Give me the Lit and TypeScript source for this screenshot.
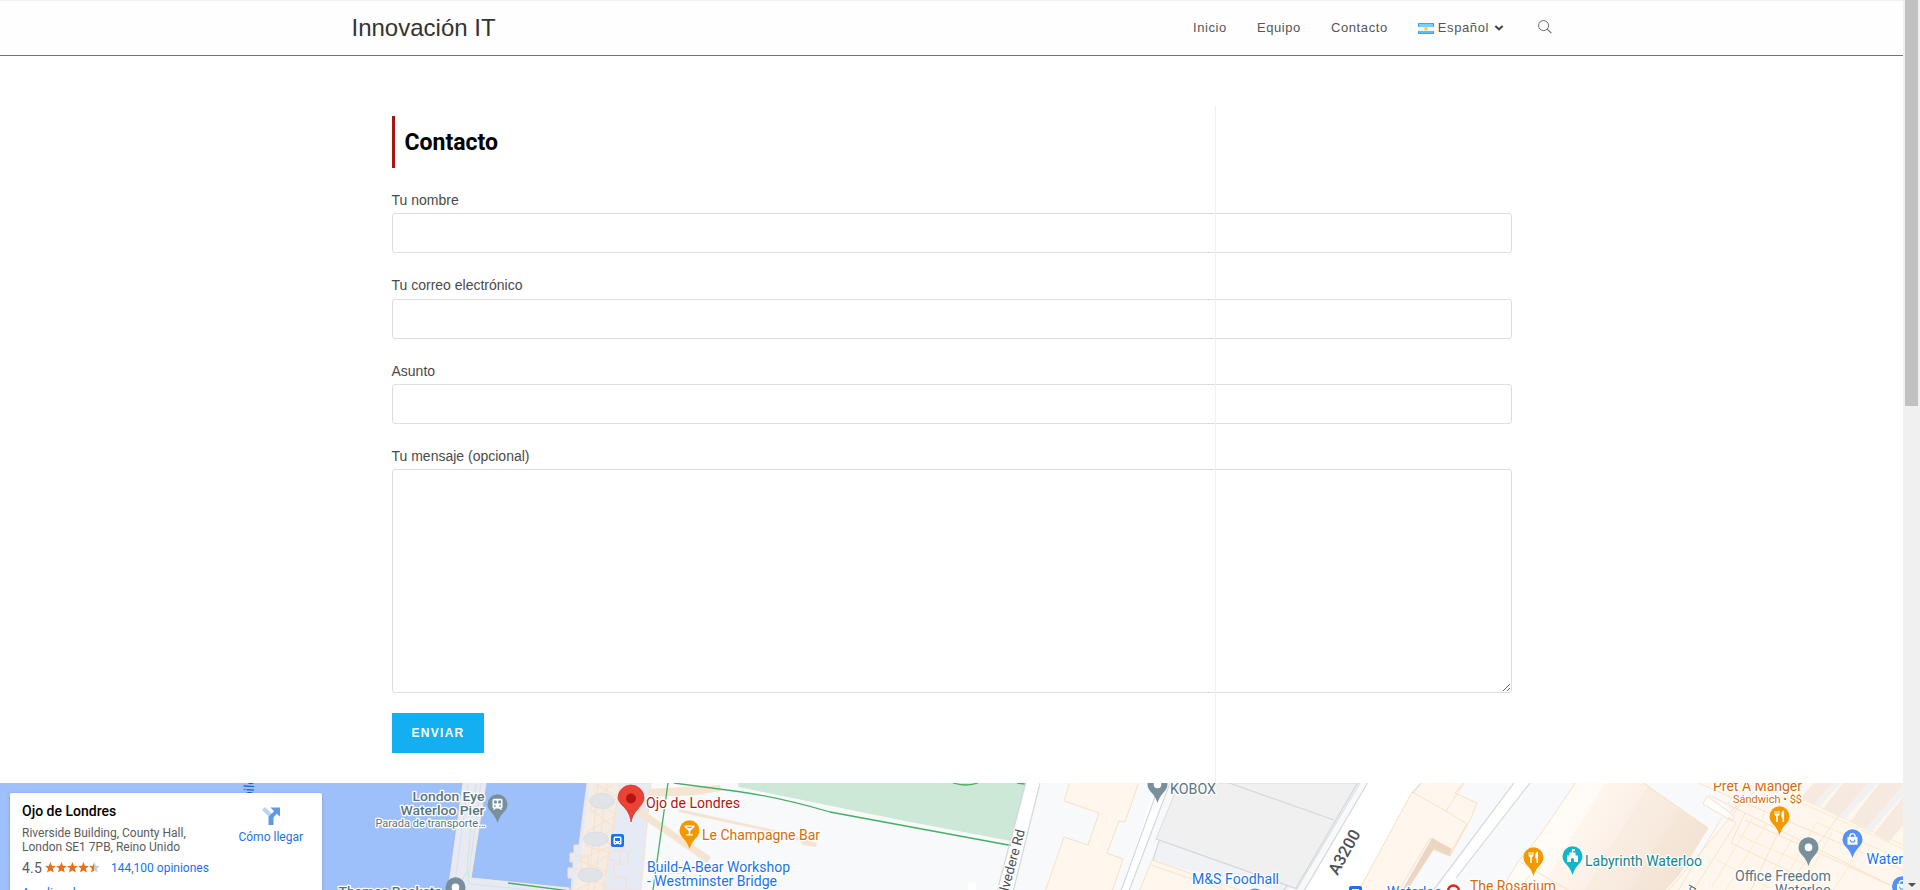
import { LitElement, html, svg, css } from "lit";
import { customElement } from "lit/decorators.js";

interface MapLabel {
  text: string;
  x: number;
  y: number;
  width?: number;
  size: number;
  tone: string;
  anchor?: string;
}

const LABELS: MapLabel[] = [
  { text: "London Eye", x: 484.5, y: 801, width: 72, size: 13.5, tone: "slate strong", anchor: "end" },
  { text: "Waterloo Pier", x: 484.5, y: 815, width: 84, size: 13.5, tone: "slate strong", anchor: "end" },
  { text: "Parada de transporte…", x: 485.5, y: 826.5, width: 110, size: 11, tone: "slate", anchor: "end" },
  { text: "Thames Rockets", x: 441.5, y: 895.5, width: 103, size: 13.5, tone: "slate strong", anchor: "end" },
  { text: "Ojo de Londres", x: 646, y: 808, width: 94, size: 14, tone: "red" },
  { text: "Le Champagne Bar", x: 702, y: 840, width: 118, size: 14, tone: "orange" },
  { text: "Build-A-Bear Workshop", x: 647, y: 872, width: 143, size: 14, tone: "blue" },
  { text: "- Westminster Bridge", x: 647, y: 886, width: 130, size: 14, tone: "blue" },
  { text: "KOBOX", x: 1170, y: 794, width: 46, size: 14, tone: "slate" },
  { text: "M&S Foodhall", x: 1192, y: 884, width: 87, size: 14, tone: "blue" },
  { text: "Waterloo", x: 1387, y: 896.5, width: 55, size: 14, tone: "blue" },
  { text: "The Rosarium", x: 1470, y: 891, width: 86, size: 14, tone: "orange" },
  { text: "Labyrinth Waterloo", x: 1585, y: 866, width: 117, size: 14, tone: "teal" },
  { text: "Pret A Manger", x: 1802, y: 791, width: 89, size: 14, tone: "orange", anchor: "end" },
  { text: "Sándwich • $$", x: 1802, y: 803, width: 69, size: 11, tone: "orange", anchor: "end" },
  { text: "Office Freedom", x: 1831, y: 881, width: 96, size: 14, tone: "slate", anchor: "end" },
  { text: "Waterloo", x: 1831, y: 895, width: 56, size: 14, tone: "slate", anchor: "end" },
  { text: "Waterloo", x: 1866.5, y: 864, width: 56, size: 14, tone: "blue" },
];

/* Pin whose tip is at the given point. */
const pin = (x: number, y: number, color: string, glyph: unknown) => svg`
  <g transform="translate(${x} ${y})">
    <path d="M0 0 C-1.2 -3.4 -2.4 -6.6 -5.6 -10 C-8.2 -12.6 -10 -15 -10 -18.8 A10 10 0 0 1 10 -18.8 C10 -15 8.2 -12.6 5.6 -10 C2.4 -6.6 1.2 -3.4 0 0Z" fill=${color}/>
    <g transform="translate(0 -18.6)">${glyph}</g>
  </g>`;

const dot = () => svg`<circle r="3.8" fill="#fff"/>`;
const fork = () => svg`<path d="M-5 -5.5V-2.2Q-5 -.6 -3.3 -.4V5.5H-1.7V-.4Q0 -.6 0 -2.2V-5.5H-1V-2.4H-2V-5.5H-3V-2.4H-4V-5.5Z M4.6 -5.8Q1.8 -5.4 1.8 -1.6V.8H3V5.5H4.6Z" fill="#fff"/>`;
const glass = () => svg`<path d="M-5 -5H5V-3.6L.8 .6V3.8H3.2V5.2H-3.2V3.8H-.8V.6L-5 -3.6ZM-2.8 -3.6L-1.6 -2.4H1.6L2.8 -3.6Z" fill="#fff" fill-rule="evenodd"/>`;
const castle = () => svg`<path d="M-.6 -7.500H2.500V-5.400H.6V-3.8H3V-1H5.500V5.5H1.5V2.5Q0 .8 -1.5 2.5V5.5H-5.500V-1H-3V-3.8H-.6Z" fill="#fff"/>`;
const bag = () => svg`<path d="M-5 -2.5H5V5.3H-5Z" fill="#fff"/><path d="M-2.6 -2V-3.2A2.6 2.6 0 0 1 2.6 -3.2V-2" fill="none" stroke="#fff" stroke-width="1.3"/><path d="M-2.3 .4A2.3 2.3 0 0 0 2.3 .4" fill="none" stroke="#5491f5" stroke-width="1.2"/>`;
const train = () => svg`<path d="M-3.5 -5.6H3.5Q5 -5.6 5 -4V2.7Q5 4 3.6 4L4.8 5.4H3L1.8 4H-1.8L-3 5.4H-4.8L-3.6 4Q-5 4 -5 2.7V-4Q-5 -5.6 -3.5 -5.6ZM-3.6 -3.9V-1H-.7V-3.9ZM.7 -3.9V-1H3.6V-3.9ZM-3.4 .8V2.3H-1.8V.8ZM1.8 .8V2.3H3.4V.8Z" fill="#fff" fill-rule="evenodd"/>`;

@customElement("site-header")
class SiteHeader extends LitElement {
  static styles = css`
    :host { display: block; height: 56px; box-sizing: border-box; border-top: 1px solid #f1f1f1;
      border-bottom: 1px solid #757575; background: #fefefe; font-family: "Liberation Sans", Arial, sans-serif; }
    .inner { width: 1200px; margin: 0 auto; height: 54px; display: flex; justify-content: space-between; }
    .brand { font-size: 24px; line-height: 53px; color: #333; text-decoration: none; }
    .nav { display: flex; height: 53px; font-size: 13px; line-height: 53px; letter-spacing: .6px; color: #555; }
    .item { padding: 0 15px; display: flex; align-items: center; white-space: nowrap; }
    .flag { margin: 2px 4px 0 0; }
    .chev { margin: 0 0 0 5px; }
    .search { padding: 0 0 0 18.5px; display: flex; align-items: center; }
    .search svg { margin-top: -2px; }
  `;
  render() {
    return html`<div class="inner">
      <a class="brand">Innovación IT</a>
      <nav class="nav">
        <a class="item">Inicio</a><a class="item">Equipo</a><a class="item">Contacto</a>
        <a class="item">
          <svg class="flag" width="16" height="11" viewBox="0 0 16 11">
            <rect width="16" height="11" fill="#3ba9ec"/><rect x="1" y="1" width="14" height="3" fill="#75d0fa"/>
            <rect x="0" y="4" width="16" height="4" fill="#f4f4f4"/><rect x="1" y="8" width="14" height="2" fill="#58c0f7"/>
            <circle cx="8" cy="5.8" r="1.8" fill="#f6cf3c"/>
          </svg>Español
          <svg class="chev" width="10" height="6" viewBox="0 0 10 6"><path d="M1.3 1L5 4.3L8.7 1" fill="none" stroke="#444" stroke-width="2"/></svg>
        </a>
        <a class="search"><svg width="14" height="14" viewBox="0 0 14 14"><circle cx="5.6" cy="5.6" r="5" fill="none" stroke="#666"/><path d="M9.2 9.2L13.4 13.2" stroke="#666" stroke-width="1.1"/></svg></a>
      </nav>
    </div>`;
  }
}

@customElement("contact-form")
class ContactForm extends LitElement {
  static styles = css`
    :host { display: block; box-sizing: border-box; height: 677px; width: 1120px; padding-top: 10px;
      font: 14px/25.2px "Liberation Sans", Arial, sans-serif; color: #4a4a4a; }
    h2 { margin: 0 0 20.2px; height: 52px; box-sizing: border-box; border-left: 3px solid #a91515; padding-left: 10px;
      font: 700 23px/54px Roboto, sans-serif; color: #000; }
    label { display: block; margin-bottom: 20px; }
    input, textarea { display: block; box-sizing: border-box; width: 100%; height: 40px; border: 1px solid #ddd;
      border-radius: 3px; background: transparent; padding: 6px 12px; outline: none; font: inherit; }
    textarea { height: 224px; resize: vertical; }
    button { display: block; border: 0; background: #13aff0; color: #fff; width: 92px; height: 40px; padding: 0 0 0 1px;
      font: 700 12px/40px "Liberation Sans", Arial, sans-serif; letter-spacing: 1.3px; }
  `;
  render() {
    return html`<h2>Contacto</h2>
      ${["Tu nombre", "Tu correo electrónico", "Asunto"].map((t) => html`<label>${t}<input type="text" /></label>`)}
      <label>Tu mensaje (opcional)<textarea></textarea></label>
      <button>ENVIAR</button>`;
  }
}

@customElement("place-card")
class PlaceCard extends LitElement {
  static styles = css`
    :host { display: flex; justify-content: space-between; box-sizing: border-box; width: 312px; height: 130px;
      padding: 9px 19px 0 12px; background: #fff; border-radius: 2px; box-shadow: 0 1px 4px -1px rgba(0,0,0,.3);
      font: 12px/14px Roboto, sans-serif; color: #5b5b5b; }
    .name { font-weight: 500; font-size: 14px; line-height: 19px; color: #000; margin-bottom: 5px; }
    .score { display: flex; align-items: center; margin-top: 5px; height: 17px; }
    .num { font-size: 14px; letter-spacing: .2px; width: 23px; }
    .stars { margin-right: 11px; }
    .link { color: #1a73e8; }
    .more { margin-top: 10px; }
    .route { display: flex; flex-direction: column; align-items: center; padding-top: 5px; }
    .route svg { margin-bottom: 5px; }
  `;
  render() {
    const star = "M5 -.3L6.5 3.4L10.4 3.7L7.4 6.3L8.4 10.2L5 8.1L1.6 10.2L2.6 6.3L-.4 3.7L3.5 3.4Z";
    return html`<div>
        <div class="name">Ojo de Londres</div>
        <div>Riverside Building, County Hall,<br />London SE1 7PB, Reino Unido</div>
        <div class="score"><span class="num">4.5</span>
          <svg class="stars" width="55" height="11" viewBox="-.4 -.3 55 11">
            <defs><linearGradient id="half"><stop offset=".5" stop-color="#e7711b"/><stop offset=".5" stop-color="#ccc"/></linearGradient></defs>
            ${[0, 1, 2, 3, 4].map((i) => svg`<path transform="translate(${i * 11} 0)" d=${star} fill=${i < 4 ? "#e7711b" : "url(#half)"}/>`)}
          </svg><span class="link">144,100 opiniones</span></div>
        <div class="link more">Ampliar el mapa</div>
      </div>
      <div class="route">
        <svg width="18" height="18" viewBox="0 0 18 18"><path d="M0 3L3 0L10 7L7 10Z" fill="#b9d4f7"/><path d="M6.5 18V9.7L12 4.3L8.5 .5H18V9.5L14.7 6.8L11.5 10.5V18Z" fill="#5e9ae8"/></svg>
        <span class="link">Cómo llegar</span>
      </div>`;
  }
}

@customElement("place-map")
class PlaceMap extends LitElement {
  static styles = css`
    :host { display: block; position: relative; height: 107px; overflow: hidden; }
    .canvas { display: block; }
    .card { position: absolute; left: 10px; top: 10px; }
    text { font-family: Roboto, sans-serif; paint-order: stroke; stroke: #fff; stroke-width: 2.6px; stroke-linejoin: round; }
    .slate { fill: #5a7480; } .strong { font-weight: 500; } .red { fill: #b31412; } .orange { fill: #d56e0c; }
    .blue { fill: #1a73e8; } .teal { fill: #12858d; } .road { fill: #4d5156; } .river { fill: #1f62c9; stroke: none; }
    .bldg { fill: #fff6ee; stroke: #fbdfc2; stroke-width: 1; }
    .kerb { fill: none; stroke: #d4d7dc; stroke-width: 1.2; }
    .path { fill: none; stroke: #45ae63; stroke-width: 1.3; }
    .beam { fill: #f6e4d3; }
    .detail { fill: none; stroke: #f8dfc6; stroke-width: .9; }
    .bay { fill: none; stroke: #faecc9; stroke-width: 1; }
  `;

  private riverside() {
    return svg`
      <rect x="0" y="783" width="600" height="107" fill="#9dc0fa"/>
      <path d="M463 783H486L471 878L569 888V892H448Z" fill="#e7eaf2" stroke="#f6e7da"/>
      <path d="M468 783L454 890M481 783L468 880L471 884L540 891" fill="none" stroke="#d8dfea"/>
      <path d="M476 783L472 815L467 870L469 877M468 870L460 884" fill="none" stroke="#cfe8d3" stroke-width="1.2"/>
      <path class="path" d="M508 883L570 891"/>
      <path d="M587 783L579 845L574 845V853H570V862H573V868H568V878H572L571 890H641L651 783Z" fill="#e6eaf4" stroke="#fbe0c8"/>
      <path d="M590 783H621L604 890H573L582 846Z" fill="#f5ece4"/>
      <path class="detail" d="M594 783L619 798L589 808L615 828L585 846L611 853L580 875L607 886M615 783L592 800L617 815L586 832L613 845L578 860L608 872L577 890M607 783L594 890M598 783L588 890M620 783L603 890"/>
      <path class="detail" d="M612 851H628V864H614V877H626V890M620 851V864M607 860H614M575 856H588V869H574M581 856V880H594"/>
      <g fill="#e0e3e8" stroke="#cfd4dc" stroke-width=".5"><ellipse cx="602" cy="801" rx="12.5" ry="7.5"/><ellipse cx="596" cy="839" rx="12.5" ry="7"/><ellipse cx="590" cy="875" rx="12.5" ry="7"/></g>`;
  }

  private park() {
    return svg`
      <path d="M738.5 783H1026L1011 841L900 820L738.5 787Z" fill="#cde8d6"/>
      <path class="beam" d="M648 789L720 785L721 791L698 795L648 797ZM640 808L711 857L707 863L633 812ZM680 809L783 832L817 843L816 847L802 845L801 842L775 833L678 812Z"/>
      <path class="path" d="M668 783L653 890"/>
      <path class="path" stroke-width="1.6" d="M674 783L738 791.5Q778 797 830 812L1011 845.5M953 783Q966 787 978 783M1017 783L1025 784"/>
      <path d="M660 874L684 873L690 877L720 881L728 890" class="kerb" opacity=".5"/>
      <path d="M968 890V883L976 882V890Z" fill="#fff"/>
      <path d="M1027 783H1040L1013 890H999Z" fill="#fff"/>
      <path class="kerb" d="M1025.500 783L997.500 890M1040 783L1013.500 890"/>`;
  }

  private midtown() {
    return svg`
      <path class="bldg" d="M1070 782H1139L1125 822L1119 821L1107 853L1123 859L1112 892H1045L1064 837L1088 845L1099 813L1064 801Z"/>
      <path d="M1156 783H1170L1129 892H1121Z" fill="#fff"/>
      <path class="kerb" d="M1160 783L1121 891M1170 783L1129 891"/>
      <path d="M1179 783H1360L1297 889L1156 839Z" fill="#f0f0f0" stroke="#dcdcdc"/>
      <path d="M1159 841L1290 887L1287 892L1152 862Z" fill="#f0f2f5"/>
      <path class="kerb" d="M1156 839L1297 889M1159 841L1153 860M1229 783L1334 820" stroke-width="1"/>
      <path class="bldg" d="M1152 860L1245 892H1139Z"/><path class="detail" d="M1151 865L1230 892"/>
      <path d="M1367 783H1420L1359 892H1303Z" fill="#fff"/>
      <path class="kerb" d="M1357.500 783L1296 888M1367.500 783L1304 891M1288 885L1283 891"/>
      <path d="M1420 783L1412 795L1357 892H1440L1516 783Z" fill="#f8f9fb"/>
      <path class="bldg" d="M1412 792L1422 782H1464L1455 793L1477 803L1471 818L1450 856L1434 850V843L1430 838L1398 892H1358Z"/>
      <path d="M1432 838L1452 849L1450 856L1434 849L1406 892H1401Z" fill="#edd6c0"/>
      <path class="detail" d="M1412 792L1446 811L1464 783M1446 811L1467 824L1449 855"/>
      <path class="kerb" d="M1421 783L1413 793" opacity=".7"/>
      <path d="M1514 783H1530L1456 878L1447 892H1435Z" fill="#fff"/>
      <path class="kerb" d="M1514 783L1432 892M1530 783L1456 878"/>`;
  }

  private eastside() {
    return svg`
      <defs><linearGradient id="roof" gradientUnits="userSpaceOnUse" x1="1550" y1="800" x2="1680" y2="880">
        <stop offset="0" stop-color="#fffdf9"/><stop offset=".25" stop-color="#fffaf4"/><stop offset=".25" stop-color="#fef6ee"/>
        <stop offset=".5" stop-color="#fbf0e7"/><stop offset=".5" stop-color="#f9ede2"/><stop offset=".75" stop-color="#f7e9dd"/>
        <stop offset=".75" stop-color="#f5e7d9"/><stop offset="1" stop-color="#f3e3d4"/></linearGradient></defs>
      <path d="M1576 782H1642L1708 828L1668 892H1500L1518 862L1540 835Z" fill="url(#roof)" stroke="#fbdfc2"/>
      <path class="detail" d="M1520 862L1570 891M1530 875L1518 891"/>
      <path d="M1698 783L1722 790L1733 815L1727 820L1664 892H1903V783Z" fill="#fff7ee"/>
      <path d="M1707 796L1734 816L1732 821L1703 804Z" fill="#fff" stroke="#fbdfc2"/>
      <path class="detail" d="M1698 783L1903 870M1709 795L1890 885M1745 800L1668 891M1722 817L1678 891M1745 813L1731 843M1731 843L1830 891M1781 827L1750 892M1850 800L1784 892M1745 820L1903 891M1765 783L1730 812M1728 817L1736 823L1693 891"/>
      <path class="bay" d="M1752 819L1712 887M1766 824L1726 890M1795 834L1762 890M1815 825L1778 892M1832 832L1800 891M1862 846L1832 892M1802 799L1903 845M1800 802L1903 849M1815 822L1890 854M1717 860L1770 888M1738 835L1808 865"/>
      <g fill="#f6e9df"><path d="M1814 783H1835L1816 805L1801 798ZM1843 783H1871L1841 818L1823 809ZM1880 783H1903V784L1868 831L1850 822L1867 799ZM1903 797V825L1889 842L1874 834Z"/></g>
      <g fill="#f1f1f1"><path d="M1832 783H1841L1819 807L1814 804ZM1868 783H1878L1844 820L1839 816ZM1903 785V795L1870 833L1865 829Z"/></g>`;
  }

  render() {
    return html`<svg class="canvas" width="1903" height="107" viewBox="0 783 1903 107">
        <rect x="0" y="783" width="1903" height="107" fill="#f8f9fb"/>
        ${this.riverside()}${this.park()}${this.midtown()}${this.eastside()}
        <g>${LABELS.map((l) => svg`<text class=${l.tone} x=${l.x} y=${l.y} font-size=${l.size} text-anchor=${l.anchor ?? "start"} textLength=${l.width ?? 0} lengthAdjust="spacingAndGlyphs">${l.text}</text>`)}</g>
        <text class="river" font-size="14" transform="translate(252 815) rotate(-86)">Jubilee</text>
        <text class="road" font-size="13.5" transform="translate(1004.500 907) rotate(-75)" textLength="79" lengthAdjust="spacingAndGlyphs">Belvedere Rd</text>
        <text class="road" font-size="16.500" font-weight="500" transform="translate(1337.500 876) rotate(-61)">A3200</text>
        <text class="road" font-size="11" transform="translate(1690 899) rotate(-60)">Rd</text>
        ${pin(497.5, 823, "#78909c", train())}
        ${pin(455.500, 906, "#78909c", dot())}
        ${pin(689.5, 849, "#f29900", glass())}
        ${pin(1157.500, 803, "#78909c", dot())}
        ${pin(1533.5, 876, "#f29900", fork())}
        ${pin(1572.5, 875, "#12b5cb", castle())}
        ${pin(1779.5, 835, "#f29900", fork())}
        ${pin(1808.5, 866, "#78909c", dot())}
        ${pin(1852.5, 858, "#5491f5", bag())}
        ${pin(1902, 905, "#5491f5", bag())}
        <path d="M631 822C630 814 627 810 622 805C619 802 618 799 618 798A13 13 0 0 1 644 798C644 802 641 805 638 809C634 813 632 817 631 822Z" fill="#ea4335" stroke="#c5352a" stroke-width=".7"/>
        <circle cx="631" cy="798.500" r="5" fill="#b31412"/>
        <g transform="translate(611 834)"><rect width="13" height="13" rx="2" fill="#1a73e8"/><path d="M3.500 2.500H9.500L10.500 4V10H9.500V11H8.500V10H4.500V11H3.500V10H2.500V4ZM4 4V7H9V4ZM4 8V9H5V8ZM8 8V9H9V8Z" fill="#fff" fill-rule="evenodd"/></g>
        <rect x="1349" y="886" width="13" height="13" rx="2" fill="#1a73e8"/><path d="M1352 889H1359V890H1352Z" fill="#fff"/>
        <circle cx="1255" cy="898" r="9.5" fill="#5491f5"/>
        <circle cx="1453.500" cy="891" r="5.500" fill="#fff" stroke="#e32119" stroke-width="2.400"/>
      </svg>
      <place-card class="card"></place-card>`;
  }
}

@customElement("app-root")
class AppRoot extends LitElement {
  static styles = css`
    :host { display: grid; grid-template-columns: 1903px 17px; height: 890px; overflow: hidden; background: #fff; }
    .main { display: flex; justify-content: center; box-sizing: border-box; height: 727px; padding-top: 50px; }
    .wrap { position: relative; width: 1200px; display: flex; justify-content: center; }
    .divider { position: absolute; left: 863.5px; top: 0; width: 1px; height: 677px; background: #f0f0f0; }
    .bar { background: #f0f0f0; display: flex; flex-direction: column; align-items: center; justify-content: space-between; }
    .thumb { width: 13px; height: 406px; background: #c1c1c1; }
    .arrow { border: 4px solid transparent; border-top-color: #505050; border-bottom: 0; margin-bottom: 3px; }
  `;
  render() {
    return html`<div class="page">
        <site-header></site-header>
        <main class="main"><div class="wrap"><contact-form></contact-form><div class="divider"></div></div></main>
        <place-map></place-map>
      </div>
      <div class="bar"><div class="thumb"></div><div class="arrow"></div></div>`;
  }
}
